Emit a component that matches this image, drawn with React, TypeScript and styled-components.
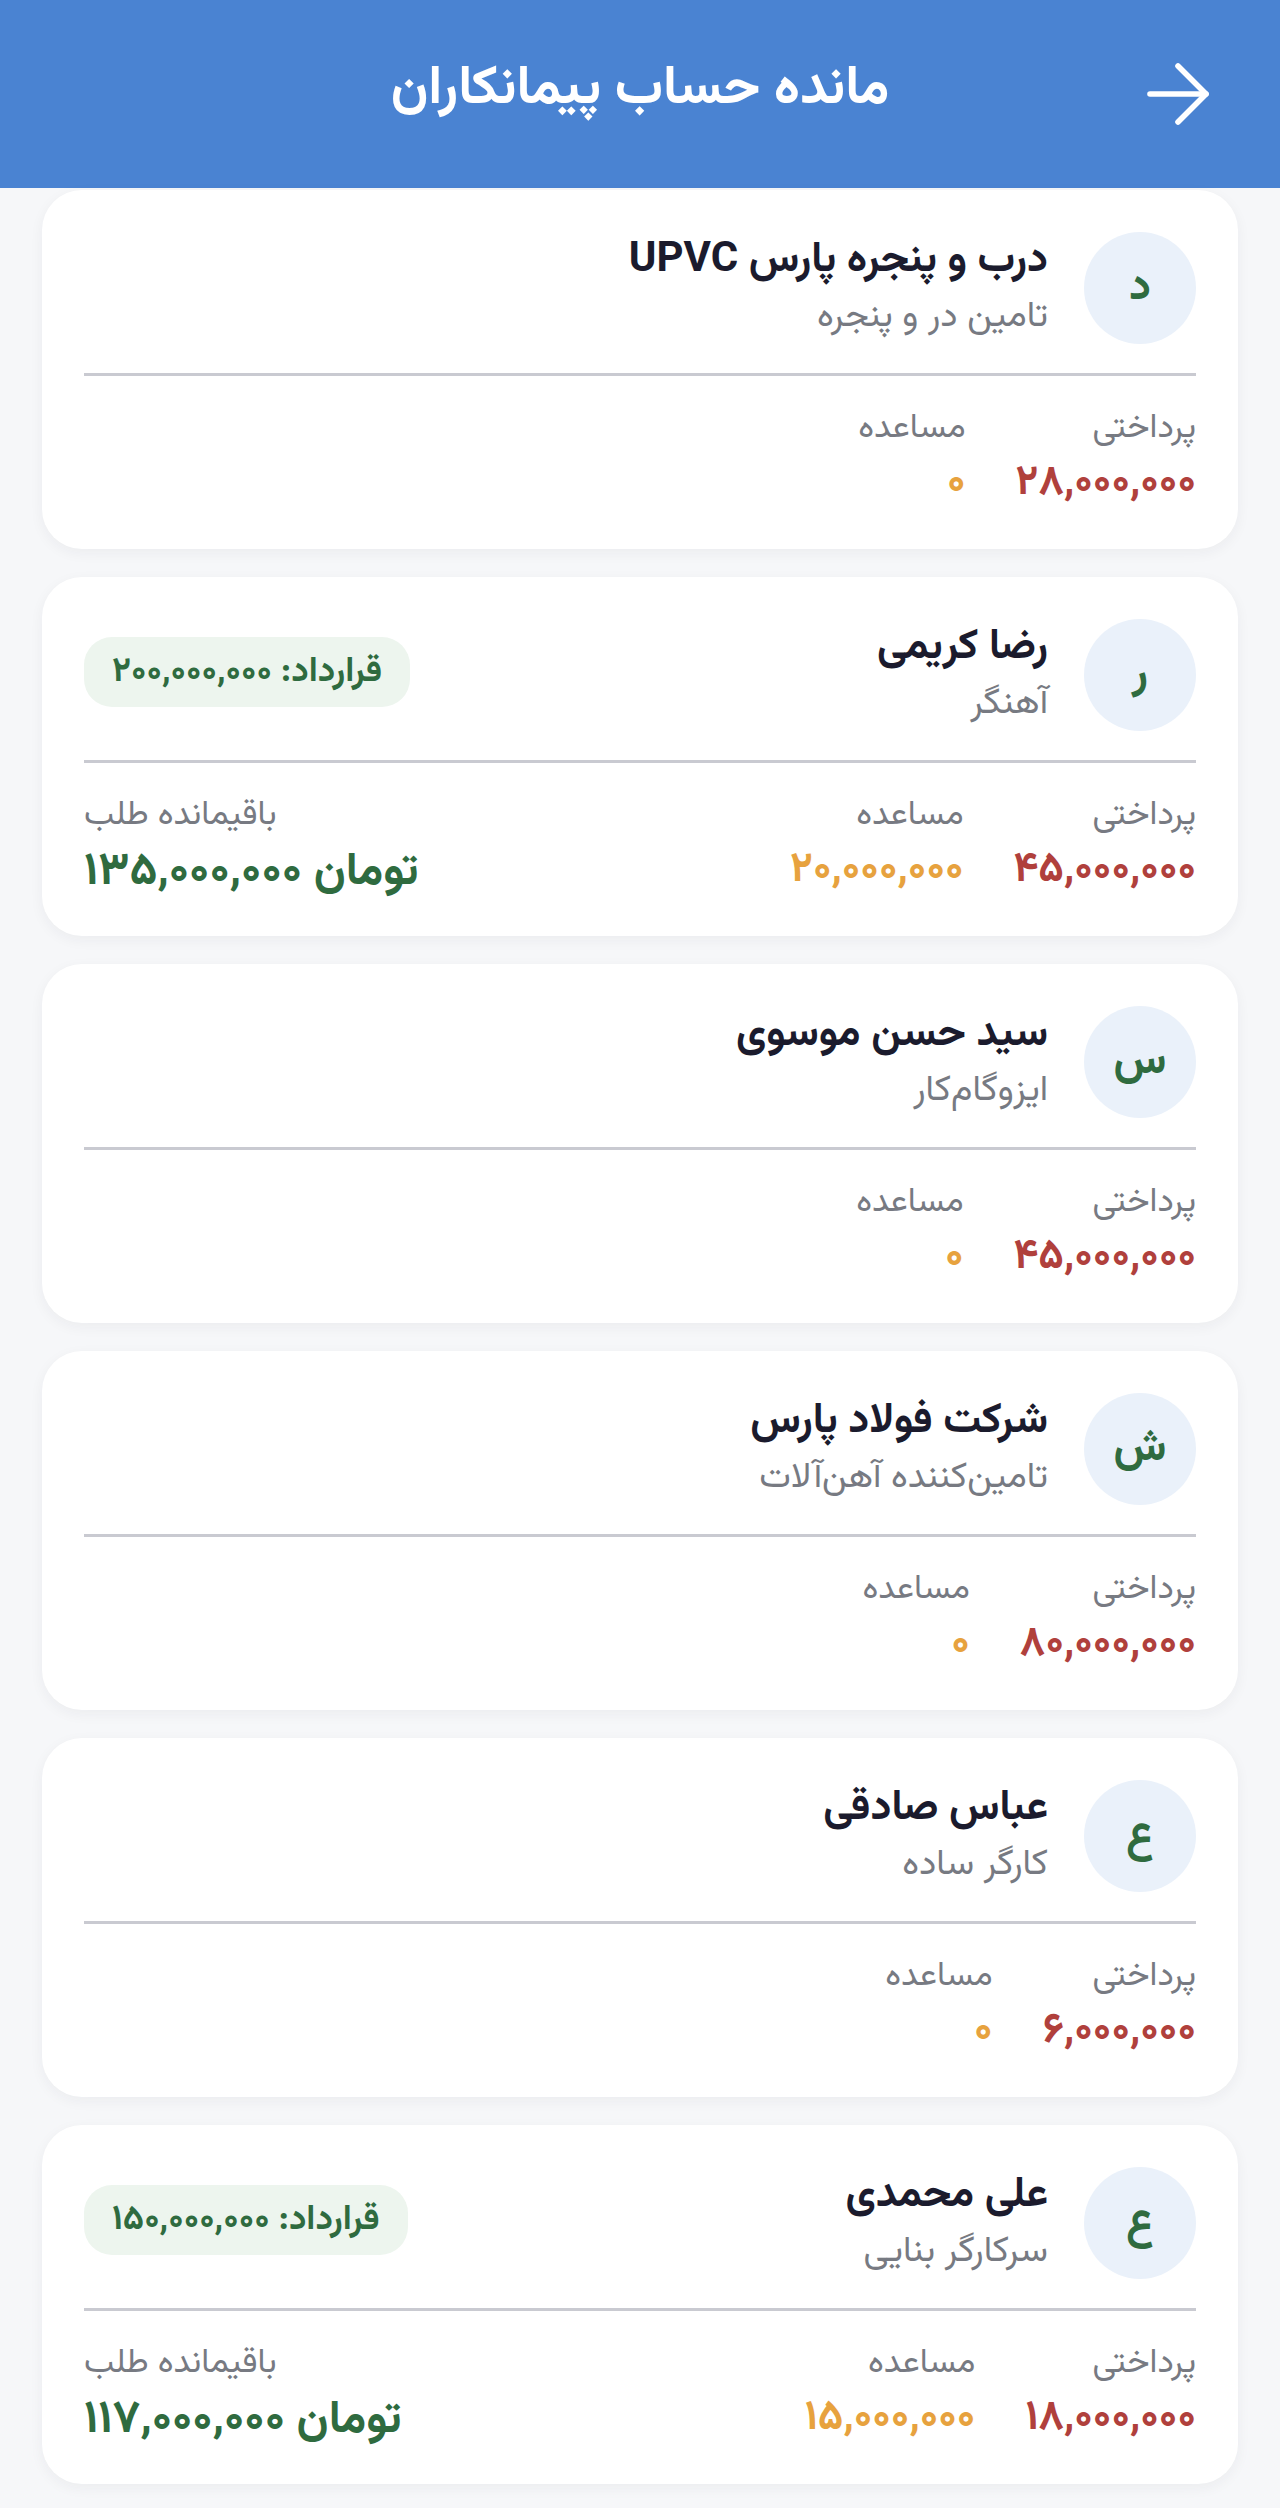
import styled, { createGlobalStyle } from "styled-components";
import { ArrowRight } from "lucide-react";

type Contractor = {
  initial: string;
  name: string;
  role: string;
  paid: string;
  advance: string;
  contract?: string;
  remaining?: string;
};

const contractors: Contractor[] = [
  {
    initial: "د",
    name: "درب و پنجره پارس UPVC",
    role: "تامین در و پنجره",
    paid: "۲۸,۰۰۰,۰۰۰",
    advance: "۰",
  },
  {
    initial: "ر",
    name: "رضا کریمی",
    role: "آهنگر",
    paid: "۴۵,۰۰۰,۰۰۰",
    advance: "۲۰,۰۰۰,۰۰۰",
    contract: "۲۰۰,۰۰۰,۰۰۰",
    remaining: "۱۳۵,۰۰۰,۰۰۰",
  },
  {
    initial: "س",
    name: "سید حسن موسوی",
    role: "ایزوگام‌کار",
    paid: "۴۵,۰۰۰,۰۰۰",
    advance: "۰",
  },
  {
    initial: "ش",
    name: "شرکت فولاد پارس",
    role: "تامین‌کننده آهن‌آلات",
    paid: "۸۰,۰۰۰,۰۰۰",
    advance: "۰",
  },
  {
    initial: "ع",
    name: "عباس صادقی",
    role: "کارگر ساده",
    paid: "۶,۰۰۰,۰۰۰",
    advance: "۰",
  },
  {
    initial: "ع",
    name: "علی محمدی",
    role: "سرکارگر بنایی",
    paid: "۱۸,۰۰۰,۰۰۰",
    advance: "۱۵,۰۰۰,۰۰۰",
    contract: "۱۵۰,۰۰۰,۰۰۰",
    remaining: "۱۱۷,۰۰۰,۰۰۰",
  },
];

const App = () => {
  return (
    <>
      <GlobalStyle />
      <Page dir="rtl">
        <Header>
          <BackButton aria-label="بازگشت">
            <ArrowRight size={96} strokeWidth={1.4} color="#fff" />
          </BackButton>
          <Title>مانده حساب پیمانکاران</Title>
          <span />
        </Header>
        <List>
          {contractors.map((c, i) => (
            <Card key={i}>
              <TopRow>
                <Avatar>{c.initial}</Avatar>
                <Info>
                  <Name>{c.name}</Name>
                  <Role>{c.role}</Role>
                </Info>
                {c.contract && <Badge>قرارداد: {c.contract}</Badge>}
              </TopRow>
              <Divider />
              <BottomRow>
                <Stats>
                  <Stat>
                    <Label>پرداختی</Label>
                    <Value $color="#b0403c">{c.paid}</Value>
                  </Stat>
                  <Stat>
                    <Label>مساعده</Label>
                    <Value $color="#e7a23e">{c.advance}</Value>
                  </Stat>
                </Stats>
                {c.remaining && (
                  <Stat $end>
                    <Label>باقیمانده طلب</Label>
                    <Remaining>تومان {c.remaining}</Remaining>
                  </Stat>
                )}
              </BottomRow>
            </Card>
          ))}
        </List>
      </Page>
    </>
  );
};

const GlobalStyle = createGlobalStyle`
  body {
    margin: 0;
    background: #f6f7f9;
    font-family: "Vazirmatn", "Noto Sans Arabic", "DejaVu Sans", sans-serif;
  }
`;

const Page = styled.div`
  width: 1280px;
  min-height: 2508px;
  background: #f6f7f9;
`;

const Header = styled.header`
  height: 188px;
  background: #4a83d2;
  display: grid;
  grid-template-columns: 1fr auto 1fr;
  align-items: center;
  padding: 0 54px;
  box-sizing: border-box;
`;

const BackButton = styled.button`
  justify-self: start;
  background: none;
  border: none;
  padding: 0;
  display: flex;
  cursor: pointer;
`;

const Title = styled.h1`
  margin: 0 0 8px;
  color: #fff;
  font-size: 54px;
  font-weight: 700;
`;

const List = styled.div`
  display: flex;
  flex-direction: column;
  gap: 28px;
  padding: 2px 42px 40px;
`;

const Card = styled.div`
  background: #fff;
  border-radius: 40px;
  padding: 42px 42px 40px;
  box-shadow: 0 4px 14px rgba(30, 40, 60, 0.05);
`;

const TopRow = styled.div`
  display: flex;
  align-items: center;
  gap: 36px;
`;

const Avatar = styled.div`
  width: 112px;
  height: 112px;
  flex-shrink: 0;
  border-radius: 50%;
  background: #eaf1fa;
  color: #2f6b3f;
  font-size: 44px;
  font-weight: 700;
  display: flex;
  align-items: center;
  justify-content: center;
`;

const Info = styled.div`
  display: flex;
  flex-direction: column;
  gap: 4px;
  flex: 1;
`;

const Name = styled.div`
  color: #1b1b2d;
  font-size: 42px;
  font-weight: 700;
  line-height: 54px;
`;

const Role = styled.div`
  color: #777a82;
  font-size: 36px;
  line-height: 50px;
`;

const Badge = styled.div`
  background: #edf5ee;
  color: #2f6b3f;
  font-size: 35px;
  font-weight: 700;
  border-radius: 28px;
  padding: 0 28px;
  height: 70px;
  display: flex;
  align-items: center;
  margin-bottom: 6px;
`;

const Divider = styled.div`
  height: 3px;
  background: #c9cad1;
  margin: 29px 0 31px;
`;

const BottomRow = styled.div`
  display: flex;
  justify-content: space-between;
  align-items: flex-end;
`;

const Stats = styled.div`
  display: flex;
  gap: 50px;
`;

const Stat = styled.div<{ $end?: boolean }>`
  display: flex;
  flex-direction: column;
  align-items: ${(p) => (p.$end ? "flex-end" : "stretch")};
  gap: ${(p) => (p.$end ? "12px" : "8px")};
`;

const Label = styled.div`
  color: #777a82;
  font-size: 34px;
  line-height: 44px;
`;

const Value = styled.div<{ $color: string }>`
  color: ${(p) => p.$color};
  font-size: 42px;
  font-weight: 700;
  line-height: 50px;
`;

const Remaining = styled.div`
  color: #2f6b3f;
  font-size: 46px;
  font-weight: 700;
  line-height: 46px;
`;

export default App;
